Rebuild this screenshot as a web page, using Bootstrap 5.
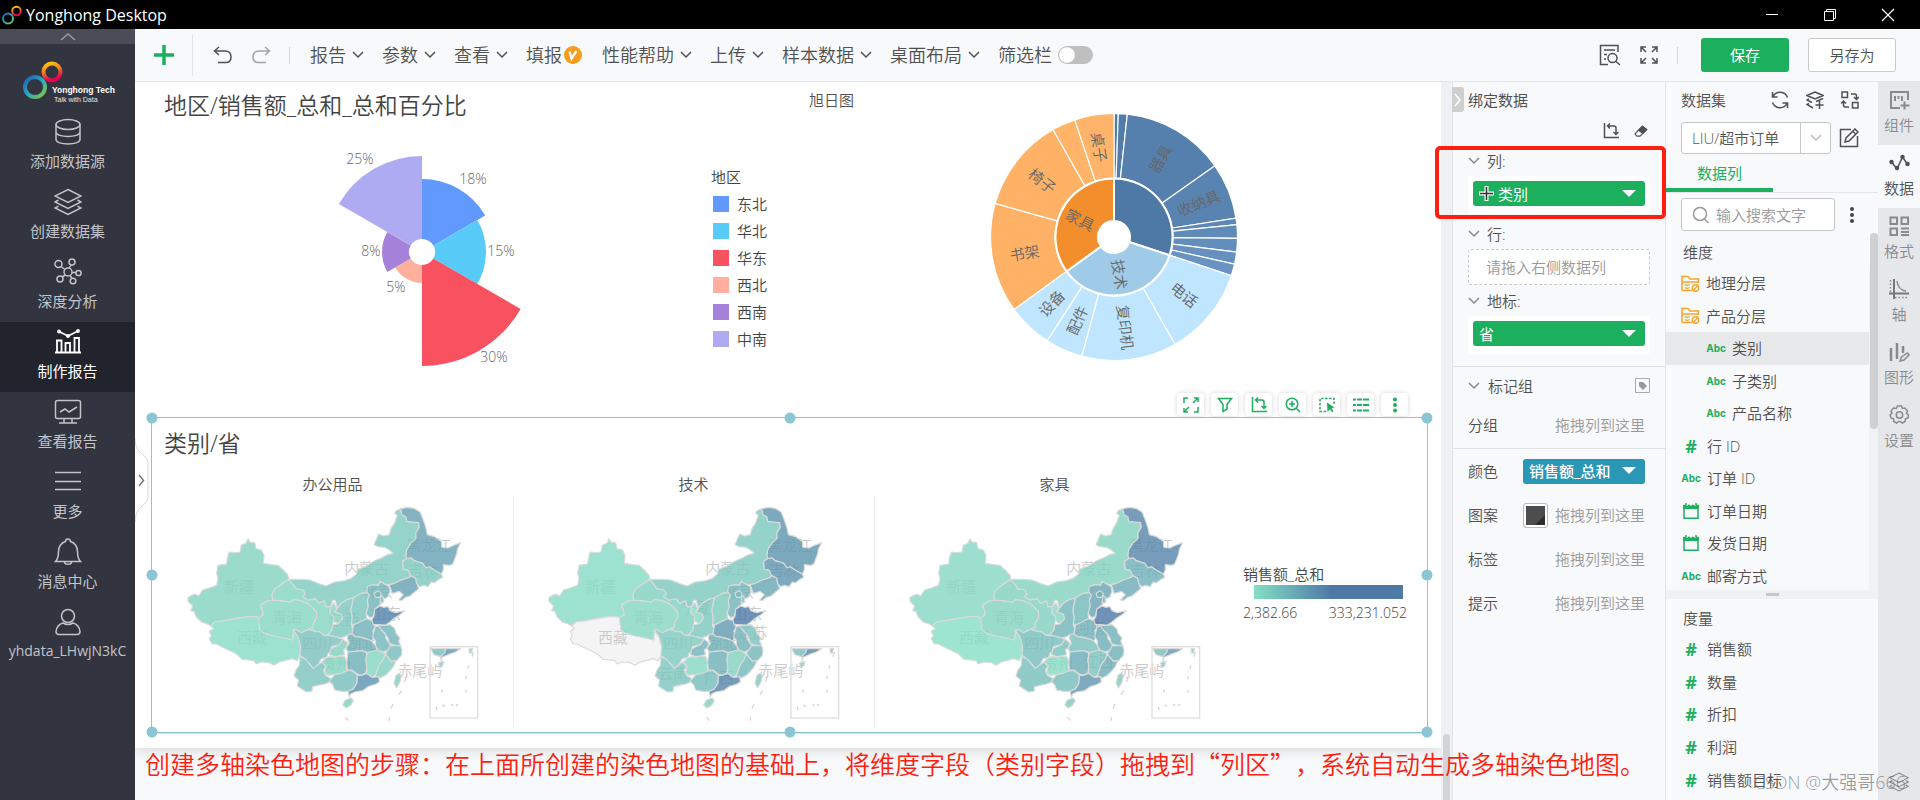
<!DOCTYPE html>
<html lang="zh-CN">
<head>
<meta charset="utf-8">
<meta name="viewport" content="width=device-width, initial-scale=1">
<title>Yonghong Desktop</title>
<link href="https://cdn.jsdelivr.net/npm/bootstrap@5.3.0/dist/css/bootstrap.min.css" rel="stylesheet">
<style>
:root{--yh-green:#1caf5d;--yh-line:#e4e5ea;--yh-bg:#f8f9fb;--yh-frame:#8cc5d4}
body{font-family:"Open Sans","Noto Sans CJK SC",sans-serif;font-size:15px;line-height:20px;color:#505050;background:var(--yh-bg);font-weight:350}
button,input,select{font-family:inherit;font-weight:inherit}
svg{display:block;flex:none}
.ico{fill:none;stroke:currentColor;stroke-width:1.5}
.min-h-0{min-height:0}
.min-w-0{min-width:0}
.latin-sm{font-size:14px}
.titlebar{height:29px;background:#000;color:#fff;padding:0 24px 0 2px}
.titlebar .app-name{font-size:16px;font-weight:400}
.win-btn{background:none;border:0;color:#fff;padding:0;width:16px}
.win-btns{gap:42px}
/* left navigation */
.side{width:135px;flex:none;background:#323440;color:#c3c4c8}
.side-collapse{height:15px;background:#4a4c57;border:0;color:#9a9ba3;padding:0}
.side-logo{height:68px;padding:16px 0 0 22px}
.side a{height:70px;color:inherit;text-decoration:none;padding-top:6px;gap:3px;line-height:24px;font-weight:400}
.side a.active{background:#21232d;color:#fff}
/* top menu */
.menu{height:53px;flex:none;border-bottom:1px solid var(--yh-line);padding:0 24px 0 0;font-size:18px}
.menu button{background:none;border:0;padding:0;color:inherit;gap:6px}
.menu .add-btn{width:58px;height:42px;border-right:1px solid var(--yh-line);color:var(--yh-green)}
.menu .undo{margin:0 18px 0 20px}
.menu .redo{margin-right:18px;opacity:.5}
.menu .vline{width:1px;height:17px;background:#d4d5d9}
.menu-list{gap:18px;margin-left:20px}
.menu-list .no-arrow{gap:2px;margin-right:2px}
.menu-list .form-switch{gap:6px}
.menu-right{gap:19px}
.menu .form-check-input{width:35px;height:18px;margin:0;border:0;background-color:#bfbfbf;--bs-form-switch-bg:url("data:image/svg+xml,%3csvg xmlns='http://www.w3.org/2000/svg' viewBox='-4 -4 8 8'%3e%3ccircle r='3.5' fill='%23fff'/%3e%3c/svg%3e")}
.menu .btn-save,.menu .btn-saveas{width:88px;height:34px;font-size:15px;border-radius:3px;line-height:20px}
.menu .btn-save{background:var(--yh-green);color:#fff;font-weight:400}
.menu .btn-saveas{background:#fff;border:1px solid #c9c9c9}
/* report canvas */
.sheet{background:#fff;height:666px;box-shadow:0 2px 12px rgba(0,0,0,.14);clip-path:inset(0 0 -16px 0)}
.chart-title{font-size:23px;line-height:30px;color:#444;font-weight:inherit;margin:0}
.chart-row{height:311px}
.chart-row .chart-title{padding:8px 0 0 29px}
.sun-title{left:21px;top:8px}
.legend-box{width:77px;color:#444;gap:7px;padding-top:47px}
.legend-box .swatch{width:16px;height:16px}
.legend-box>div{padding-left:2px}
.legend-box>:first-child{padding:0}
.w-tools{height:24px;gap:7px;padding-right:33px}
.w-tools button{width:27px;height:23px;border:0;border-radius:4px;background:#fff;box-shadow:0 0 5px rgba(0,0,0,.16);color:var(--yh-green);padding:0}
.map-frame{margin:0 13px 0 16px;height:316px;border:1px solid var(--yh-frame);box-shadow:0 1px 0 #c9e4ea}
.map-frame .chart-title{padding:10px 0 0 12px}
.map-frame .grip{width:11px;height:11px;border-radius:50%;background:var(--yh-frame)}
.map-row{padding-top:14px}
.map-col{flex:0 1 361px}
.map-col+.map-col .map-body{border-left:1px solid #eee}
.map-title{line-height:24px}
.color-scale{height:14px;background:linear-gradient(90deg,#84dfc5,#4e79a7 52%);margin:1px 4px 4px 11px}
.scale-box{width:168px;padding-top:92px;color:#444}
.gutter{width:11px;flex:none;background:#eff0f3}
.gutter i{width:7px;height:66px;border-radius:4px 4px 0 0;background:#d3d4d5}
.drawer{left:0;top:357px}
.note{left:145px;bottom:22px;font:400 25px/30px "Noto Sans CJK SC",sans-serif;font-weight:350;color:#ff1e0f;text-spacing-trim:space-all}
.note-box{inset:5px -1px auto -18px;height:73px;border:4px solid #ff1e0f;border-radius:5px}
/* binding panel */
.bind{width:214px;flex:none;border-left:1px solid var(--yh-line);border-right:1px solid var(--yh-line)}
.panel-name{font-size:15px;line-height:20px;margin:0;font-weight:inherit}
.bind .panel-name{font-weight:400;padding-top:8px}
.bind .quick{gap:15px;padding:13px 2px 2px 0}
.bind .fold{left:-1px;top:5px;width:12px;height:25px;border:0;padding:0;background:#cfcfcf;color:#fff;border-radius:0 3px 3px 0}
.bind .sect{padding:0 15px 0 15px}
.bind .lab{gap:7px;height:27px;padding-bottom:4px}
.bind .landmark{padding-top:4px;padding-bottom:12px}
.lab svg,.chev{color:#888}
.slot{background:#fff;border-radius:3px;padding:5px 5px 8px}
.pill{height:25px;border:0;border-radius:3px;background:var(--yh-green);color:#fff;font-weight:400;padding:0 9px 0 6px}
.pill.teal{background:#2a97b7;width:122px;font-weight:500}
.dropzone{height:36px;border:1px dashed #c8c8c8;border-radius:3px;background:#fff;color:#999;line-height:34px;padding-left:17px}
.mark-head{height:37px}
.mark-row{height:44px;padding:0 20px 0 15px}
.mark-row span{color:#999}
.mark-row.first{height:45px;padding-bottom:3px}
.pattern{width:25px;height:25px;background:#fff;border:1px solid #bbb;border-radius:3px;padding:2px;margin-right:7px}
/* dataset panel */
.data{width:212px;flex:none}
.data-head{height:40px;padding:0 19px 4px 15px}
.data-tools{gap:17px}
.data-row{padding-left:15px}
.data .pick{width:150px;height:32px;border:1px solid #c6c6c6;border-radius:3px;background:#fff}
.data .pick select{appearance:none;border:0;background:none;padding:0 0 0 10px;width:119px;color:#555}
.data .pick span{width:30px;border-left:1px solid #c6c6c6;color:#bbb}
.data .tab-line{height:39px;border-bottom:1px solid var(--yh-line)}
.data .tab-line a{width:107px;border-bottom:4px solid var(--yh-green);color:var(--yh-green);text-decoration:none;font-weight:400;line-height:38px}
.data .find-row{padding-top:5px;gap:14px}
.data .find{width:154px;height:33px;border:1px solid #c6c6c6;border-radius:3px;background:#fff;padding:0 10px;gap:6px}
.data .find svg{color:#999}
.data .find input{border:0;min-width:0;width:100%;padding:0;background:none;outline:0}
.data .find input::placeholder{color:#999;opacity:1}
.fields{display:grid;grid-auto-rows:minmax(0,1fr);margin:0;padding:0;list-style:none}
.fields li{display:flex;align-items:center;gap:6px;padding-left:15px}
.fields li.sub-item{padding-left:40px}
.fields li.on{background:#e7e8ea}
.fields b{width:20px;text-align:center;color:var(--yh-green);font:700 10px/16px Inter,"Open Sans",sans-serif}
.fields b.num{font:700 18px/18px "Open Sans",sans-serif}
.fields b svg{margin:auto}
.group-name{padding:6px 0 0 17px;line-height:30px}
.dims{height:323px}
.dims .fields{height:325px}
.dims .track{width:9px;background:#f1f2f4}
.track i{width:8px;height:196px;border-radius:4px;background:#cfd0d2;top:-34px;right:0}
.splitter{height:9px;flex:none;background:#f0f1f3}
.splitter i{width:13px;height:3px;background:#c6c7c9}
.measures{height:163px}
/* right tabs */
.tabs-v{width:42px;flex:none;background:#e6e7ea;color:#8a8a8a}
.tabs-v a{height:63px;color:inherit;text-decoration:none;gap:5px;padding-top:8px}
.tabs-v a.active{background:var(--yh-bg);color:#505050}
.wmark{right:14px;bottom:6px;font-size:18px;line-height:24px;color:rgba(90,90,90,.6)}
.map-lab{font-size:45px;fill:#cacaca;text-anchor:middle;dominant-baseline:central}
.pie-lab{font-size:15px;fill:#666;text-anchor:middle;dominant-baseline:central}
.pie-lab.pct{font-size:14px}
</style>
</head>
<body>
<svg width="0" height="0" class="position-absolute">
  <defs>
    <linearGradient id="ringA" x1="0" y1="0" x2="1" y2="1"><stop offset="0" stop-color="#1c5fae"/><stop offset=".5" stop-color="#2aa7c4"/><stop offset="1" stop-color="#8cc63f"/></linearGradient>
    <linearGradient id="ringB" x1="0" y1="0" x2=".3" y2="1"><stop offset="0" stop-color="#fdd000"/><stop offset=".5" stop-color="#f07a28"/><stop offset="1" stop-color="#e6004f"/></linearGradient>
    <symbol id="rings" viewBox="0 0 40 38"><circle cx="12" cy="26" r="10" fill="none" stroke="url(#ringA)" stroke-width="4"/><circle cx="29" cy="11" r="8.5" fill="none" stroke="url(#ringB)" stroke-width="4"/></symbol>
    <symbol id="down" viewBox="0 0 12 8"><path d="M1 1l5 5 5-5" fill="none" stroke="currentColor" stroke-width="1.5"/></symbol>
    <symbol id="tri" viewBox="0 0 14 8"><path d="M0 0h14L7 7z" fill="currentColor"/></symbol>
    <symbol id="swap" viewBox="0 0 16 16"><path d="M1.5 0v14.5H16M5 3h6q2 0 2 2v6M7 .5L4.500 3 7 5.500M10.500 9l2.500 2.500L15.500 9" fill="none" stroke="currentColor" stroke-width="1.500"/></symbol>
    <symbol id="folder" viewBox="0 0 19 17"><path d="M1 15.500V1.500h6l2 2.500h8.500v4M1 15.500h10M1 7h16.500" fill="none" stroke="#f9a42c" stroke-width="1.600"/><path d="M4 9.500q2 2 5 0M4 12.500q2 1.500 5 0" fill="none" stroke="#f9a42c" stroke-width="1.300"/><circle cx="14.500" cy="13" r="3.200" fill="none" stroke="#f9a42c" stroke-width="1.400"/><path d="M12.500 15l4-4" stroke="#f9a42c" stroke-width="1.300"/></symbol>
    <symbol id="cal" viewBox="0 0 16 16"><path d="M1 2.500h14v12.700H1z" fill="none" stroke="currentColor" stroke-width="1.500"/><path d="M.3 2h15.400v4H.3z" fill="currentColor"/><path d="M4 0v3M8 0v3M12 0v3" stroke="#fff" stroke-width="1"/><path d="M3 0v2M13 0v2" stroke="currentColor" stroke-width="1.500"/></symbol>
    <symbol id="stack" viewBox="0 0 28 28"><path d="M14 1.500L27 8l-13 6.500L1 8zM4.500 12L1 14l13 6.500L27 14l-3.500-2M4.500 18.200L1 20l13 6.500L27 20l-3.500-1.800" fill="none" stroke="currentColor" stroke-width="1.500"/></symbol>
  </defs>
</svg>

<div class="vh-100 d-flex flex-column overflow-hidden position-relative">
<header class="titlebar d-flex align-items-center flex-shrink-0">
  <svg width="20" height="20"><use href="#rings"/></svg>
  <span class="app-name ms-1">Yonghong Desktop</span>
  <div class="win-btns d-flex ms-auto">
    <button class="win-btn" aria-label="最小化"><svg width="16" height="14"><path d="M2 6.500h12" stroke="#fff"/></svg></button>
    <button class="win-btn" aria-label="还原"><svg width="16" height="14" fill="none" stroke="#fff"><path d="M2.500 3.500h9v9h-9zM4.500 3V1.500h9v9H12"/></svg></button>
    <button class="win-btn" aria-label="关闭"><svg width="16" height="14" fill="none" stroke="#fff" stroke-width="1.200"><path d="M2 1l12 12M14 1L2 13"/></svg></button>
  </div>
</header>

<div class="d-flex flex-grow-1 min-h-0">
  <nav class="side d-flex flex-column text-center">
    <button class="side-collapse d-flex justify-content-center align-items-center" aria-label="收起"><svg width="16" height="9" class="ico"><path d="M1 8l7-6 7 6"/></svg></button>
    <div class="side-logo">
      <svg width="98" height="46"><g transform="translate(1 1)"><use href="#rings" width="40" height="38"/></g>
        <text x="30" y="33" font-family="Liberation Sans, sans-serif" font-weight="700" font-size="8.500" fill="#fff">Yonghong Tech</text>
        <text x="32" y="42" font-family="Liberation Sans, sans-serif" font-weight="400" font-size="7" fill="#e5e5e5">Talk with Data</text></svg>
    </div>
    <a href="#" class="d-flex flex-column align-items-center"><svg width="28" height="28" class="ico"><ellipse cx="14" cy="6.500" rx="12" ry="5"/><path d="M2 6.500v15c0 6 24 6 24 0v-15M2 14c0 6 24 6 24 0"/></svg>添加数据源</a>
    <a href="#" class="d-flex flex-column align-items-center"><svg width="28" height="28"><use href="#stack"/></svg>创建数据集</a>
    <a href="#" class="d-flex flex-column align-items-center"><svg width="28" height="28" class="ico"><circle cx="14" cy="14" r="4"/><circle cx="4.500" cy="6" r="3.500"/><circle cx="18" cy="4" r="3"/><circle cx="24.500" cy="15" r="2.600"/><circle cx="6" cy="21" r="3"/><circle cx="19" cy="23" r="2.800"/><path d="M7 8.500l4 3M17 7l-2 3.500M18 14.500h4M11.500 17l-3.500 2M16 17.500l2 3"/></svg>深度分析</a>
    <a href="#" class="active d-flex flex-column align-items-center"><svg width="28" height="28" class="ico"><path stroke-width="1.800" d="M1 24.500h26M3 24V12.500h4.500V24M11.500 24v-9H16v9M20.500 24V10H25v14M5 3.500L14 8l10-5"/><circle cx="5" cy="3.500" r="1.200"/><circle cx="14" cy="8" r="1.200"/><circle cx="24" cy="3" r="1.200"/></svg>制作报告</a>
    <a href="#" class="d-flex flex-column align-items-center"><svg width="28" height="28" class="ico"><rect x="1.500" y="2.500" width="25" height="18" rx="2"/><path d="M6 14l5-3 4 3 8-5M10 20.500v4M18 20.500v4M5 25h18"/></svg>查看报告</a>
    <a href="#" class="d-flex flex-column align-items-center"><svg width="28" height="28" class="ico"><path d="M1 4.500h26M1 13.500h26M1 21.500h26"/></svg>更多</a>
    <a href="#" class="d-flex flex-column align-items-center"><svg width="28" height="28" class="ico"><path d="M1.500 23.500h25c-3-3-3-6-3-10 0-5-3-9-7-10a2.500 2.500 0 0 0-5 0c-4 1-7 5-7 10 0 4 0 7-3 10zM10.500 24c0 3 7 3 7 0"/></svg>消息中心</a>
    <a href="#" class="d-flex flex-column align-items-center latin-sm"><svg width="28" height="28" class="ico"><circle cx="14" cy="8" r="6.500"/><path d="M5 26.500h18q3 0 3-3-1-7-7-8.500-5 3-10 0-6 1.500-7 8.500 0 3 3 3z"/></svg>yhdata_LHwjN3kC</a>
  </nav>

  <div class="flex-grow-1 d-flex flex-column min-w-0 min-h-0">
    <div class="menu d-flex align-items-center">
      <button class="add-btn d-flex justify-content-center align-items-center" aria-label="新建"><svg width="20" height="20"><path d="M10 0v20M0 10h20" stroke="currentColor" stroke-width="3.500"/></svg></button>
      <button class="undo" aria-label="撤销"><svg width="20" height="18" class="ico"><path d="M6 1L1.500 5 6 9M2 5h10q6 0 6 6t-6 5.500H5"/></svg></button>
      <button class="redo" aria-label="重做"><svg width="20" height="18" class="ico"><path d="M14 1l4.500 4L14 9M18 5H8q-6 0-6 6t6 5.500h7"/></svg></button>
      <div class="vline"></div>
      <div class="menu-list d-flex align-items-center">
        <button class="d-flex align-items-center">报告<svg width="12" height="8"><use href="#down"/></svg></button>
        <button class="d-flex align-items-center">参数<svg width="12" height="8"><use href="#down"/></svg></button>
        <button class="d-flex align-items-center">查看<svg width="12" height="8"><use href="#down"/></svg></button>
        <button class="no-arrow d-flex align-items-center">填报<svg width="18" height="18"><circle cx="9" cy="9" r="9" fill="#f99b1c"/><path d="M5.500 5.500l2 7 5-7.500" fill="none" stroke="#fff" stroke-width="2.400"/></svg></button>
        <button class="d-flex align-items-center">性能帮助<svg width="12" height="8"><use href="#down"/></svg></button>
        <button class="d-flex align-items-center">上传<svg width="12" height="8"><use href="#down"/></svg></button>
        <button class="d-flex align-items-center">样本数据<svg width="12" height="8"><use href="#down"/></svg></button>
        <button class="d-flex align-items-center">桌面布局<svg width="12" height="8"><use href="#down"/></svg></button>
        <div class="form-switch d-flex align-items-center p-0"><label for="filterBar">筛选栏</label><input class="form-check-input" type="checkbox" role="switch" id="filterBar"></div>
      </div>
      <div class="menu-right ms-auto d-flex align-items-center">
        <button aria-label="预览"><svg width="22" height="22" class="ico"><path d="M19 8V1.500H1.500v19H9M5 6h11M5 10.500h3M5 15h2"/><circle cx="13.500" cy="14" r="4.500"/><path d="M17 17.500l4 3.500"/></svg></button>
        <button aria-label="全屏"><svg width="18" height="18" class="ico"><path d="M1 6V1h5M1 1l5 5M12 1h5v5M17 1l-5 5M1 12v5h5M1 17l5-5M17 12v5h-5M17 17l-5-5"/></svg></button>
        <div class="vline"></div>
        <button class="btn-save ms-1">保存</button>
        <button class="btn-saveas">另存为</button>
      </div>
    </div>

    <div class="d-flex flex-grow-1 min-h-0">
      <main class="flex-grow-1 position-relative">
        <div class="sheet">
          <div class="chart-row d-flex">
            <section class="col-6 d-flex flex-column">
              <h1 class="chart-title">地区/销售额_总和_总和百分比</h1>
              <div class="d-flex">
                <div class="flex-grow-1 d-flex justify-content-center">
                  <svg width="240" height="260" viewBox="303 121 240 260" id="rose"></svg>
                </div>
                <div class="legend-box d-flex flex-column" id="roseLegend"><div>地区</div></div>
              </div>
            </section>
            <section class="col-6 position-relative">
              <div class="sun-title position-absolute">旭日图</div>
              <svg class="mx-auto mt-4" width="260" height="260" viewBox="-129 -131 260 260" id="burst"></svg>
            </section>
          </div>
          <div class="w-tools d-flex justify-content-end">
            <button aria-label="放大"><svg width="16" height="16" class="ico m-auto"><path d="M1 6V1h4M11 1h4v4M15 1l-5 5M1 11v4h4M1 15l5-5M11 15h4v-5"/></svg></button>
            <button aria-label="筛选"><svg width="16" height="16" class="ico m-auto"><path d="M1.500 1.500h13L10 7.500V12l-4 2.500v-7z"/></svg></button>
            <button aria-label="转置"><svg width="16" height="16" class="m-auto"><use href="#swap"/></svg></button>
            <button aria-label="缩放"><svg width="16" height="16" class="ico m-auto"><circle cx="7" cy="7" r="5.800"/><path d="M11.500 11.500L15 15M4 7h6M7 4v6"/></svg></button>
            <button aria-label="选择"><svg width="16" height="16" class="ico m-auto"><path stroke-dasharray="2.500 1.500" d="M7 14.500H1V1.500h14V7"/><path fill="currentColor" stroke="none" d="M8 5.500l7.500 5-3 .8 2 3-1.500 1-2-3L8.500 15z"/></svg></button>
            <button aria-label="列表"><svg width="16" height="16" class="ico m-auto"><path stroke-width="2.200" stroke-dasharray="3 1 5 1 6" d="M0 2.500h16M0 8h16M0 13.500h16"/></svg></button>
            <button aria-label="更多"><svg width="16" height="16" class="m-auto" fill="currentColor"><circle cx="8" cy="2.500" r="2"/><circle cx="8" cy="8" r="2"/><circle cx="8" cy="13.500" r="2"/></svg></button>
          </div>
          <section class="map-frame position-relative">
            <i class="grip position-absolute top-0 start-0 translate-middle"></i><i class="grip position-absolute top-0 start-50 translate-middle"></i><i class="grip position-absolute top-0 start-100 translate-middle"></i>
            <i class="grip position-absolute top-50 start-0 translate-middle"></i><i class="grip position-absolute top-50 start-100 translate-middle"></i>
            <i class="grip position-absolute top-100 start-0 translate-middle"></i><i class="grip position-absolute top-100 start-50 translate-middle"></i><i class="grip position-absolute top-100 start-100 translate-middle"></i>
            <h1 class="chart-title">类别/省</h1>
            <div class="map-row d-flex">
              <div class="map-col text-center"><div class="map-title">办公用品</div><div class="map-body"><svg class="mx-auto" width="330" height="232" viewBox="0 18 990 696" data-map="0"></svg></div></div>
              <div class="map-col text-center"><div class="map-title">技术</div><div class="map-body"><svg class="mx-auto" width="330" height="232" viewBox="0 18 990 696" data-map="1"></svg></div></div>
              <div class="map-col text-center"><div class="map-title">家具</div><div class="map-body"><svg class="mx-auto" width="330" height="232" viewBox="0 18 990 696" data-map="2"></svg></div></div>
              <div class="scale-box ms-1 ps-1"><div>销售额_总和</div><div class="color-scale"></div><div class="d-flex justify-content-between latin-sm">
                <span>2,382.66</span><span>333,231.052</span></div></div>
            </div>
          </section>
        </div>
        <svg class="drawer position-absolute" width="14" height="84"><path d="M0 0q0 10 6 14 7 5 7 10v34q0 5-7 10-6 5-6 15" fill="#fff" stroke="#d5d6da"/><path d="M4 36l4.500 5.500L4 47" fill="none" stroke="#777" stroke-width="1.500"/></svg>
      </main>
      <div class="gutter d-flex align-items-end justify-content-center"><i></i></div>

      <aside class="bind position-relative">
        <button class="fold position-absolute" aria-label="折叠"><svg width="12" height="14" class="ico"><path d="M3 1l5 6-5 6"/></svg></button>
        <div class="sect"><h2 class="panel-name">绑定数据</h2>
          <div class="quick d-flex justify-content-end"><svg width="16" height="16"><use href="#swap"/></svg><svg width="14" height="16" viewBox="1 0 15 16" class="ico"><path d="M2 11l8-8 4.500 3.500-7 7H4z" stroke-width="1.200"/><path d="M6 7l4-4 4.500 3.500-4 4z" fill="currentColor"/></svg></div>
        </div>
        <div class="position-relative pt-2">
          <div class="sect"><div class="lab d-flex align-items-center"><svg width="12" height="8"><use href="#down"/></svg>列:</div>
            <div class="slot"><button class="pill w-100 d-flex align-items-center"><svg width="15" height="15" viewBox="0 0 15 15"><path d="M7.500 0v15M0 7.500h15" stroke="#fff" stroke-width="4"/><path d="M7.500 1v13M1 7.500h13" stroke="#333" stroke-width="1.500"/></svg><span class="ms-1">类别</span><svg class="ms-auto" width="14" height="8"><use href="#tri"/></svg></button></div>
          </div>
          <div class="note-box position-absolute"></div>
        </div>
        <div class="sect pt-2"><div class="lab d-flex align-items-center"><svg width="12" height="8"><use href="#down"/></svg>行:</div><div class="dropzone">请拖入右侧数据列</div></div>
        <div class="sect landmark border-bottom"><div class="lab d-flex align-items-center"><svg width="12" height="8"><use href="#down"/></svg>地标:</div>
          <div class="slot"><button class="pill w-100 d-flex align-items-center"><span>省</span><svg class="ms-auto" width="14" height="8"><use href="#tri"/></svg></button></div></div>
        <div class="mark-head sect d-flex align-items-center gap-2"><svg class="chev" width="12" height="8"><use href="#down"/></svg>标记组<svg class="ms-auto" width="15" height="15"><path d="M.5.5h14v14H.5z" fill="none" stroke="#aaa"/><path d="M4 4h4l4 4-4 4-4-4z" fill="#999"/></svg></div>
        <div class="mark-row first d-flex align-items-center border-bottom">分组<span class="ms-auto">拖拽列到这里</span></div>
        <div class="mark-row d-flex align-items-center">颜色<button class="pill teal ms-auto d-flex align-items-center">销售额_总和<svg class="ms-auto" width="14" height="8"><use href="#tri"/></svg></button></div>
        <div class="mark-row d-flex align-items-center">图案<button class="pattern ms-auto" aria-label="图案"><svg width="19" height="19"><path d="M0 0h19v19H0z" fill="#4d4d4d"/><path d="M19 9v10H9z" fill="#2c2c2c"/></svg></button><span class="text-nowrap">拖拽列到这里</span></div>
        <div class="mark-row d-flex align-items-center">标签<span class="ms-auto">拖拽列到这里</span></div>
        <div class="mark-row d-flex align-items-center">提示<span class="ms-auto">拖拽列到这里</span></div>
      </aside>

      <aside class="data d-flex flex-column">
        <div class="data-head d-flex align-items-center"><h2 class="panel-name">数据集</h2>
          <div class="data-tools d-flex ms-auto">
            <svg width="18" height="18" class="ico"><path d="M2 5.500a8 8 0 0 1 14.500 1M1.500 1v5h5M16 12.500a8 8 0 0 1-14.500-1M16.500 17v-5h-5"/></svg>
            <svg width="18" height="18" class="ico"><path d="M9 1l8 3.500L9 8 1 4.500zM3 8L1 9l5 2.500M3 12.500l-2 1L7 17M10 10.500l7-3M13.500 10v8M9.500 14h8"/></svg>
            <svg width="18" height="18" class="ico"><path d="M1 1h5.500v5.500H1zM11.500 11.500H17V17h-5.500zM10 3h3.500q2 0 2 2v3M13 6l2.500 2.500L18 6M2.500 10v4q0 2 2 2H8M0 12.500L2.500 10 5 12.500"/></svg>
          </div></div>
        <div class="data-row d-flex align-items-center"><div class="pick d-flex"><select aria-label="数据集"><option>LIU/超市订单</option></select><span class="d-flex align-items-center justify-content-center"><svg width="12" height="8"><use href="#down"/></svg></span></div>
          <svg width="20" height="20" class="ico ms-2"><path d="M12 1.500H1.500v17h17V8"/><path d="M6 14l1-4 9-9 3 3-9 9zM14 3.500l3 3"/></svg></div>
        <div class="tab-line d-flex"><a href="#" class="text-center">数据列</a></div>
        <div class="data-row find-row d-flex align-items-center"><label class="find d-flex align-items-center"><svg width="18" height="18" class="ico"><circle cx="8" cy="8" r="6.500"/><path d="M12.500 13l4 4"/></svg><input type="text" placeholder="输入搜索文字" aria-label="搜索"></label>
          <svg width="6" height="18" fill="#444"><circle cx="3" cy="3" r="2"/><circle cx="3" cy="9" r="2"/><circle cx="3" cy="15" r="2"/></svg></div>
        <div class="group-name">维度</div>
        <div class="dims position-relative d-flex">
          <ul class="fields flex-grow-1">
            <li><svg width="19" height="17"><use href="#folder"/></svg>地理分层</li>
            <li><svg width="19" height="17"><use href="#folder"/></svg>产品分层</li>
            <li class="sub-item on"><b>Abc</b>类别</li>
            <li class="sub-item"><b>Abc</b>子类别</li>
            <li class="sub-item"><b>Abc</b>产品名称</li>
            <li><b class="num">#</b>行 ID</li>
            <li><b>Abc</b>订单 ID</li>
            <li><b><svg width="16" height="16"><use href="#cal"/></svg></b>订单日期</li>
            <li><b><svg width="16" height="16"><use href="#cal"/></svg></b>发货日期</li>
            <li><b>Abc</b>邮寄方式</li>
          </ul>
          <div class="track position-relative"><i class="position-absolute"></i></div>
        </div>
        <div class="splitter d-flex align-items-center justify-content-center position-relative"><i></i></div>
        <div class="group-name pt-1">度量</div>
        <ul class="fields measures">
          <li><b class="num">#</b>销售额</li><li><b class="num">#</b>数量</li><li><b class="num">#</b>折扣</li><li><b class="num">#</b>利润</li><li><b class="num">#</b>销售额目标</li>
        </ul>
      </aside>

      <nav class="tabs-v d-flex flex-column">
        <a href="#" class="d-flex flex-column align-items-center"><svg width="21" height="20" class="ico"><path stroke-width="2" d="M19 10V2H2v16h9M6 6v5M9.500 6v3M13 6v5M15.500 11.500v8M11.500 15.500h9"/></svg>组件</a>
        <a href="#" class="active d-flex flex-column align-items-center"><svg width="21" height="20" class="ico"><path d="M2.500 9L8 16l5.500-12L19 12"/><g fill="currentColor"><circle cx="2.500" cy="9" r="1.500"/><circle cx="8" cy="15" r="1.500"/><circle cx="13.500" cy="4" r="1.500"/><circle cx="18.500" cy="11" r="1.500"/></g></svg>数据</a>
        <a href="#" class="d-flex flex-column align-items-center"><svg width="21" height="20" class="ico"><path stroke-width="2" d="M1.500 1.500H8V8H1.500zM12.500 1.500H19V8h-6.500zM1.500 12.500H8V19H1.500zM12 12.500h8M12 16h8M12 19h8"/></svg>格式</a>
        <a href="#" class="d-flex flex-column align-items-center"><svg width="21" height="20" class="ico"><path d="M5 0v20M0 14.500h20" stroke="#777" stroke-width="2"/><path d="M8 2q1 9 9 10"/><path d="M1.500 1v13M6 18.500h14" stroke-dasharray="1.500 2"/></svg>轴</a>
        <a href="#" class="d-flex flex-column align-items-center"><svg width="21" height="20" class="ico"><path stroke-width="2.500" d="M2 6v13M8 1v16M14 4v7"/><path d="M11 19l1.500-4 6-4 1.500 2-5 5z"/></svg>图形</a>
        <a href="#" class="d-flex flex-column align-items-center"><svg width="21" height="20" viewBox="0 0 21 20" class="ico"><path d="M8.500 1h4l1 2.500 2.500-.5 2.500 3-1 2.300 2 1.700-.5 3-2.500.8-.3 2.700-3 1.500-2-1.500h-1.500l-2 1.500-3-1.500-.2-2.700-2.500-.8L1 10l2-1.700L2 6l2.500-3 2.800.5z"/><circle cx="10.500" cy="10" r="3.200"/></svg>设置</a>
        <svg class="mt-auto mx-auto mb-2" width="20" height="20"><use href="#stack"/></svg>
      </nav>
    </div>
  </div>
</div>

<div class="note position-absolute text-nowrap">创建多轴染色地图的步骤：在上面所创建的染色地图的基础上，将维度字段（类别字段）拖拽到“列区”，系统自动生成多轴染色地图。</div>
<div class="wmark position-absolute">CSDN @大强哥666</div>
</div>

<script src="https://cdn.jsdelivr.net/npm/bootstrap@5.3.0/dist/js/bootstrap.bundle.min.js"></script>
<script>
const NS='http://www.w3.org/2000/svg';
function add(p,n,a,t){const e=document.createElementNS(NS,n);for(const k in a)e.setAttribute(k,a[k]);if(t)e.textContent=t;p.appendChild(e);return e}
function sector(cx,cy,r0,r1,a,b){
  const P=(r,d)=>{const t=d*Math.PI/180;return (cx+r*Math.sin(t)).toFixed(1)+' '+(cy-r*Math.cos(t)).toFixed(1)};
  const L=b-a>180?1:0;
  return `M${P(r0,a)}L${P(r1,a)}A${r1} ${r1} 0 ${L} 1 ${P(r1,b)}L${P(r0,b)}A${r0} ${r0} 0 ${L} 0 ${P(r0,a)}Z`;
}
/* rose chart: region, colour, radius, label, label position */
const rose=[['东北','#6199fe',73,'18%',473,179],['华北','#58cbf8',64,'15%',501,251],['华东','#f8515f',114,'30%',494,357],['西北','#ffb09c',31,'5%',396,287],['西南','#a581d9',40,'8%',371,251],['中南','#afabf3',96,'25%',360,159]];
const roseSvg=document.getElementById('rose'),lg=document.getElementById('roseLegend');
rose.forEach((d,i)=>{
  add(roseSvg,'path',{d:sector(422,253,13,d[2],i*60,i*60+60),fill:d[1]});
  add(roseSvg,'text',{x:d[4],y:d[5],class:'pie-lab pct'},d[3]);
  const row=document.createElement('div');row.className='d-flex align-items-center gap-2';
  row.innerHTML=`<span class="swatch" style="background:${d[1]}"></span>${d[0]}`;lg.appendChild(row);
});
/* sunburst */
const bs=document.getElementById('burst');
const ring=(r0,r1,rl,list,w)=>list.forEach(([a,b,c,t])=>{
  add(bs,'path',{d:sector(0,0,r0,r1,a,b),fill:c,stroke:'#fff','stroke-width':w});
  if(t){const m=(a+b)/2,q=m*Math.PI/180;
    add(bs,'text',{class:'pie-lab',transform:`translate(${(rl*Math.sin(q)).toFixed(1)} ${(-rl*Math.cos(q)).toFixed(1)}) rotate(${m<180?m-90:m-270})`},t)}
});
ring(59,123.500,91,[[0,2,'#507ba9'],[2,6.2,'#527daa'],[6.2,54.8,'#5580ae','器具'],[54.8,81.2,'#5984b2','收纳具'],[81.2,84.3,'#5c87b6'],[84.3,90.6,'#608bb9'],[90.6,97,'#638ebc'],[97,102.7,'#6690bf'],[102.7,108.2,'#6993c2'],
 [108.2,150.4,'#bfe5ff','电话'],[150.4,195.1,'#bfe5ff','复印机'],[195.1,212.8,'#bfe5ff','配件'],[212.8,234.1,'#bfe5ff','设备'],[234.1,285.8,'#ffb265','书架'],[285.8,330.4,'#ffb265','椅子'],[330.4,341.5,'#ffb46a'],[341.5,360,'#ffb46a','桌子']],1.2);
ring(16,58.500,38,[[0,108.2,'#4e79a7'],[108.2,234.1,'#a0cbe8','技术'],[234.1,360,'#f28e2b','家具']],2);
/* provinces: outline and the fill of each of the three maps */
const prov=[
['240,146 246,156 260,158 264,176 280,180 288,196 286,220 310,224 330,226 346,240 360,256 362,268 340,282 330,290 318,300 312,314 314,330 296,334 280,342 278,350 284,362 286,374 274,384 262,380 240,380 200,386 170,392 140,396 128,408 118,402 100,396 84,380 78,364 68,362 74,348 60,334 60,322 80,312 92,318 104,300 124,294 146,286 150,264 146,250 150,226 176,222 178,204 184,186 200,188 216,186 220,166 234,160','#9adbcc','#9de1d0','#9ddfce'],
['128,408 140,396 170,392 200,386 240,380 262,380 274,384 274,404 276,420 290,430 320,438 350,444 374,450 378,424 390,440 398,470 396,495 388,512 372,506 350,512 334,516 318,526 304,518 280,516 264,522 258,512 240,510 222,508 206,492 186,482 160,470 146,462 132,462 124,446 130,438 124,424 136,416','#9de2d0','#f4f4f4','#9de4d1'],
['314,330 340,332 366,336 378,328 400,332 420,340 434,352 446,366 446,384 436,400 436,412 424,418 412,422 400,428 386,420 376,418 374,450 350,444 320,438 290,430 276,420 274,404 272,384 286,374 284,362 278,346 296,334','#9bdecd','#9bdecd','#9adbcc'],
['362,268 376,284 384,296 406,300 412,312 404,320 420,330 442,326 452,340 470,332 474,350 488,350 486,370 498,380 496,392 494,404 492,420 480,434 468,436 456,426 440,424 424,416 436,412 436,400 446,384 446,366 434,352 420,340 400,332 378,328 366,336 340,332 314,330 312,314 318,300 330,290 345,280','#9addcc','#98d9cb','#99d9cb'],
['488,350 498,338 506,356 500,366 520,372 524,386 510,402 496,392 498,380 486,370','#9bdecd','#9de1cf','#9ddfce'],
['362,268 400,268 426,270 450,280 474,288 500,276 530,272 548,266 566,252 568,238 590,230 604,222 620,212 640,204 658,194 676,190 664,180 650,172 630,170 618,164 632,132 646,138 664,134 668,118 680,98 688,76 680,70 684,62 698,56 702,74 714,80 716,94 736,96 752,98 754,112 744,128 744,146 728,160 716,180 714,196 718,206 704,214 706,238 720,240 728,256 724,262 700,270 680,280 664,284 650,282 636,274 632,286 616,284 602,288 598,300 596,308 580,310 566,318 556,324 540,328 520,340 508,354 502,332 494,330 488,350 474,350 470,332 452,340 442,326 420,330 404,320 412,312 406,300 384,296 376,284','#96d3cb','#95d3ca','#99dacb'],
['698,56 720,52 740,56 756,66 762,80 768,96 774,114 778,134 800,140 820,154 822,172 840,174 856,166 878,158 868,178 866,192 854,222 846,226 826,224 826,240 820,252 804,244 798,240 784,230 774,234 764,220 752,216 738,212 730,204 716,206 714,196 716,180 728,160 744,146 744,128 754,112 752,98 736,96 716,94 714,80 702,74','#83b3c2','#7da9be','#779dbb'],
['704,214 716,206 730,204 738,212 752,216 764,220 774,234 784,230 804,244 820,252 824,262 810,270 800,278 790,276 780,290 768,286 754,290 746,280 742,264 728,256 720,240 706,238','#95d3ca','#7eaabf','#8abfc5'],
['664,284 680,280 700,270 724,262 728,258 742,264 746,280 752,296 740,306 726,318 712,322 700,332 692,330 706,314 694,304 682,308 672,310 668,296','#83b2c1','#85b7c3','#88bbc4'],
['598,290 602,288 616,284 632,286 636,274 650,282 664,290 666,304 660,320 646,328 648,336 638,342 622,356 616,378 606,384 594,370 600,350 598,330 604,316 596,308','#8bc2c6','#8bc2c6','#85b5c2'],
['618,310 630,302 640,310 636,322 622,322','#8dc6c7','#90cac8','#8bc2c6'],
['638,316 646,322 646,336 636,338 638,326','#95d3ca','#95d3ca','#8fc9c8'],
['620,358 636,348 646,352 660,350 666,362 682,368 710,362 696,374 680,384 666,396 652,406 630,404 616,404 610,392 618,378','#739bba','#7093b8','#7092b8'],
['556,324 566,318 580,310 598,308 604,316 598,330 600,350 594,370 596,386 580,394 556,406 550,400 552,380 548,360','#94d0ca','#96d5ca','#8dc6c7'],
['508,354 520,340 540,328 556,324 548,360 552,380 550,404 554,416 552,432 540,434 530,440 516,444 492,438 480,434 492,420 494,404 510,402 524,386 520,372 502,366','#94d1ca','#94d1ca','#8cc3c6'],
['556,406 580,394 596,386 612,392 616,404 622,410 614,424 620,436 612,454 600,448 580,442 562,440 552,432','#8abfc5','#80aec0','#8abfc5'],
['630,406 652,406 666,404 680,416 684,430 696,444 692,454 698,466 680,466 664,460 660,444 652,432 640,420','#8bc2c6','#92cdc9','#8abfc5'],
['622,410 632,408 640,420 652,432 654,446 664,460 668,466 660,480 646,486 630,480 622,466 622,452 614,440 618,424','#8dc5c7','#8abfc5','#89bdc5'],
['668,466 698,468 702,480 700,496 686,512 670,514 658,500 652,490 660,480','#8ec8c7','#8cc4c6','#8ac0c5'],
['540,434 552,432 562,440 580,442 600,448 612,454 622,466 628,480 612,486 598,488 580,482 560,484 540,486 534,474 544,460 538,446','#8abfc5','#8abfc5','#91ccc8'],
['514,464 524,446 540,460 534,474 526,480 530,494 512,498 500,500 484,494 488,476','#98d9cb','#8bc1c6','#91ccc8'],
['376,420 386,420 400,428 424,418 440,424 456,426 468,436 492,438 514,444 524,448 514,464 490,470 486,486 480,490 476,502 460,506 450,524 436,536 424,520 414,510 396,496 398,470 390,440','#93ccc9','#96d3ca','#8fc9c8'],
['396,498 414,510 424,522 436,536 450,524 462,516 474,528 466,540 472,556 490,566 486,576 470,582 450,586 434,590 432,604 416,606 400,596 388,588 392,570 378,558 384,540 394,526','#93cec9','#94d1ca','#91cbc8'],
['476,502 490,500 500,502 512,498 530,500 536,516 534,532 538,542 520,550 500,554 480,556 470,550 474,528 462,516','#9adccc','#9ddfce','#9de1cf'],
['540,486 560,484 580,482 596,488 594,510 596,530 594,548 580,556 568,552 552,540 538,540 536,516','#89bec4','#89bec4','#88bcc4'],
['598,488 628,480 646,488 652,492 646,508 634,524 622,556 612,562 596,550 596,530 594,510','#9addcc','#99dacb','#92cdc9'],
['652,492 658,500 670,514 684,512 676,530 664,544 652,556 636,564 622,558 634,524 646,508','#98d9cb','#8ec7c7','#89bdc5'],
['568,556 580,556 596,550 612,562 632,560 634,576 620,584 600,590 584,602 560,606 548,612 544,622 540,604 556,596 566,580','#7ba8be','#779dbb','#7eaabf'],
['490,566 500,554 520,550 538,542 552,542 568,554 566,580 556,596 540,604 520,604 500,600 494,584 484,574','#90cac8','#8fc9c8','#8fc9c8'],
['532,630 550,624 556,632 548,646 534,654 524,644','#98d8cb','#98d8cb','#96d5ca'],
['684,556 694,550 700,556 696,576 686,594 678,580','#98d8cb','#95d3ca','#96d5ca'],
['788,476 834,476 830,488 818,500 798,494','#8fc9c8','#8fc9c8','#8fc9c8'],
['834,476 878,476 862,486 840,494 822,502 820,514 818,500 830,488','#7ba8be','#779dbb','#7eaabf'],
['812,518 828,514 824,528 814,534','#98d8cb','#98d8cb','#96d5ca'],
['903,476 914,476 910,490 904,488','#98d8cb','#95d3ca','#96d5ca']];
const base=[['新疆',213,288],['青海',357,380],['西藏',252,442],['四川',448,458],['内蒙古',596,234],['黑龙江',782,164],['吉林',765,240],['赤尾屿',755,540]];
const extra=[[['山东',655,370],['陕西',530,388],['湖北',580,458],['贵州',505,520],['北京',630,302]],
 [['山东',655,370],['湖北',580,458],['云南',432,550],['江苏',670,425],['广西',570,562],['宁夏',500,350],['北京',630,302]],
 [['河南',600,410],['江西',625,512],['贵州',505,520]]];
/* province fills are translucent so the names below show through */
const A=.8,thin=c=>'rgb('+[1,3,5].map(i=>Math.max(0,Math.round((parseInt(c.substr(i,2),16)-255*(1-A))/A)))+')';
document.querySelectorAll('[data-map]').forEach(s=>{
  const m=+s.dataset.map,names=base.concat(extra[m]);
  prov.filter(p=>p[m+1]==='#f4f4f4').forEach(p=>add(s,'polygon',{points:p[0],fill:p[m+1]}));
  names.forEach(n=>add(s,'text',{x:n[1],y:n[2],class:'map-lab'},n[0]));
  prov.forEach(p=>add(s,'polygon',{points:p[0],fill:p[m+1]==='#f4f4f4'?'none':thin(p[m+1]),'fill-opacity':A,stroke:'#dadada','stroke-width':3.5,'stroke-linejoin':'round'}));
  add(s,'rect',{x:786,y:470,width:143,height:214,fill:'none',stroke:'#dedede','stroke-width':4});
  add(s,'path',{d:'M533 682l8 10M664 682v10M675 642l-6 14M701 602l-8 12M714 560l-4 16M822 598v10M894 600v8M894 558v10M902 526l-2 10M916 486l-4 14M806 650v10M824 644l6 6M850 642l6 6M870 642l-6 6',fill:'none',stroke:'#d4d4d4','stroke-width':4});
});
</script>
</body>
</html>
